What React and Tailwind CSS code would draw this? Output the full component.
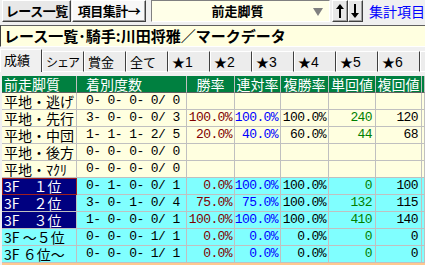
import React from 'react';

const rows = [
  { label: '平地・逃げ', count: '0- 0- 0- 0/ 0' },
  { label: '平地・先行', count: '3- 0- 0- 0/ 3', win: '100.0%', ren: '100.0%', fuku: '100.0%', tan: '240', fk: '120' },
  { label: '平地・中団', count: '1- 1- 1- 2/ 5', win: '20.0%', ren: '40.0%', fuku: '60.0%', tan: '44', fk: '68' },
  { label: '平地・後方', count: '0- 0- 0- 0/ 0' },
  { label: '平地・ﾏｸﾘ', count: '0- 0- 0- 0/ 0' },
  { label: '3F　１位', count: '0- 1- 0- 0/ 1', win: '0.0%', ren: '100.0%', fuku: '100.0%', tan: '0', fk: '100', cyan: true, navy: true, sel: true },
  { label: '3F　２位', count: '3- 0- 1- 0/ 4', win: '75.0%', ren: '75.0%', fuku: '100.0%', tan: '132', fk: '115', cyan: true, navy: true },
  { label: '3F　３位', count: '1- 0- 0- 0/ 1', win: '100.0%', ren: '100.0%', fuku: '100.0%', tan: '410', fk: '140', cyan: true, navy: true },
  { label: '3F ～５位', count: '0- 0- 0- 1/ 1', win: '0.0%', ren: '0.0%', fuku: '0.0%', tan: '0', fk: '0', cyan: true },
  { label: '3F ６位～', count: '0- 0- 0- 1/ 1', win: '0.0%', ren: '0.0%', fuku: '0.0%', tan: '0', fk: '0', cyan: true },
];

const tabs = ['成績', 'シェア', '賞金', '全て', '★1', '★2', '★3', '★4', '★5', '★6', ''];

const mono = "font-['Liberation_Mono',monospace] text-[13px] tracking-[-0.6px]";
const cell = 'h-[17px] leading-[16px] border-r border-b border-[#c0c0c0] flex items-center whitespace-pre';
const head = `${cell} bg-[#008040] text-white border-b-[#606060]`;

const Arrow = ({ down }) => (
  <svg width="8" height="14" viewBox="0 0 8 14" className={down ? 'rotate-180' : ''}>
    <polygon points="0,5 4,0 8,5" fill="#000" />
    <rect x="3" y="4" width="2" height="10" fill="#000" />
  </svg>
);

const bevel = 'border border-t-white border-l-white border-r-[#404040] border-b-[#404040] shadow-[inset_-1px_-1px_#a0a0a0]';

export default function App() {
  return (
    <div className="w-[425px] h-[265px] overflow-hidden bg-[#f0f0f0] font-['Noto_Sans_CJK_JP',sans-serif] text-black leading-[16px]">
      {/* top bar */}
      <div className="flex h-[22px] items-stretch whitespace-nowrap">
        <div className={`ml-[2px] w-[73px] flex items-center justify-center bg-[#e8e8e8] text-[13px] font-bold tracking-[-0.5px] ${bevel}`}>レース一覧</div>
        <div className={`ml-[1px] w-[77px] flex items-center justify-center bg-[#f8f8f8] text-[13px] font-bold tracking-[-0.5px] ${bevel}`}>項目集計→</div>
        <div className="ml-[5px] w-[189px] relative flex items-center bg-[#ffffe8] border border-t-[#808080] border-l-[#808080] border-r-white border-b-white">
          <span className="flex-1 text-center text-[13px] font-bold pr-[6px]">前走脚質</span>
          <span className="absolute right-[6px] top-[7px] w-0 h-0 border-l-[5px] border-r-[5px] border-t-[8px] border-l-transparent border-r-transparent border-t-[#808080]" />
        </div>
        <div className={`ml-[2px] w-[16px] flex items-center justify-center bg-[#e8e8e8] ${bevel}`}><Arrow /></div>
        <div className={`w-[16px] flex items-center justify-center bg-[#e8e8e8] ${bevel}`}><Arrow down /></div>
        <span className="ml-[6px] flex items-center text-[14px] text-[#0000ff]">集計項目</span>
      </div>

      {/* title */}
      <div className="mt-[3px] h-[22px] flex items-center bg-[#ffffe0] border-t border-l border-t-[#606060] border-l-[#404040] border-b border-b-white pl-[3px] text-[15px] font-bold whitespace-nowrap">
        レース一覧･騎手:川田将雅／マークデータ
      </div>

      {/* tabs */}
      <div className="mt-[2px] h-[23px] flex items-end">
        {tabs.map((t, i) => (
          <div
            key={i}
            className={`shrink-0 w-[42px] flex items-center pl-[3px] whitespace-nowrap overflow-hidden border-t border-l border-r border-t-white border-l-white border-r-[#404040] ${
              t === 'シェア' ? 'text-[12px] tracking-[-1px]' : 'text-[13px]'
            } ${
              i === 0 ? 'h-[23px] bg-[#f0f0f0] pb-[2px]' : 'h-[21px] bg-[#ececec] border-b border-b-white pt-[1px]'
            }`}
          >
            {t.startsWith('★') ? (
              <span>★<span className="font-['Liberation_Sans',sans-serif] text-[14px]">{t.slice(1)}</span></span>
            ) : t}
          </div>
        ))}
      </div>
      <div className="h-[4px]" />

      {/* table */}
      <div className="pl-[2px]">
        <div className="grid grid-cols-[75px_110px_48px_46px_48px_47px_46px_3px] text-[14px]">
          <div className={`${head} pl-[2px]`}>前走脚質</div>
          <div className={`${head} pl-[9px]`}>着別度数</div>
          <div className={`${head} justify-center`}>勝率</div>
          <div className={`${head} justify-center`}>連対率</div>
          <div className={`${head} justify-center`}>複勝率</div>
          <div className={`${head} justify-center`}>単回値</div>
          <div className={`${head} justify-center`}>複回値</div>
          <div className={head} />

          {rows.map((r, i) => {
            const bg = r.cyan ? 'bg-[#80ffff]' : 'bg-[#ffffe0]';
            return (
              <React.Fragment key={i}>
                <div
                  className={`${cell} pl-[2px] ${
                    r.navy ? 'bg-[#000080] text-white' : bg
                  } ${r.sel ? 'outline outline-1 -outline-offset-1 outline-[#a02020]' : ''}`}
                >
                  {r.label}
                </div>
                <div className={`${cell} ${bg} pl-[9px] ${mono}`}>{r.count}</div>
                <div className={`${cell} ${bg} justify-end pr-[2px] text-[#800000] ${mono}`}>{r.win}</div>
                <div className={`${cell} ${bg} justify-end pr-[2px] text-[#0000ff] ${mono}`}>{r.ren}</div>
                <div className={`${cell} ${bg} justify-end pr-[2px] ${mono}`}>{r.fuku}</div>
                <div className={`${cell} ${bg} justify-end pr-[3px] text-[#008000] ${mono}`}>{r.tan}</div>
                <div className={`${cell} ${bg} justify-end pr-[3px] ${mono}`}>{r.fk}</div>
                <div className={`${cell} ${bg}`} />
              </React.Fragment>
            );
          })}
          <div className="col-span-8 h-[10px] bg-[#ffc890]" />
        </div>
      </div>
    </div>
  );
}
